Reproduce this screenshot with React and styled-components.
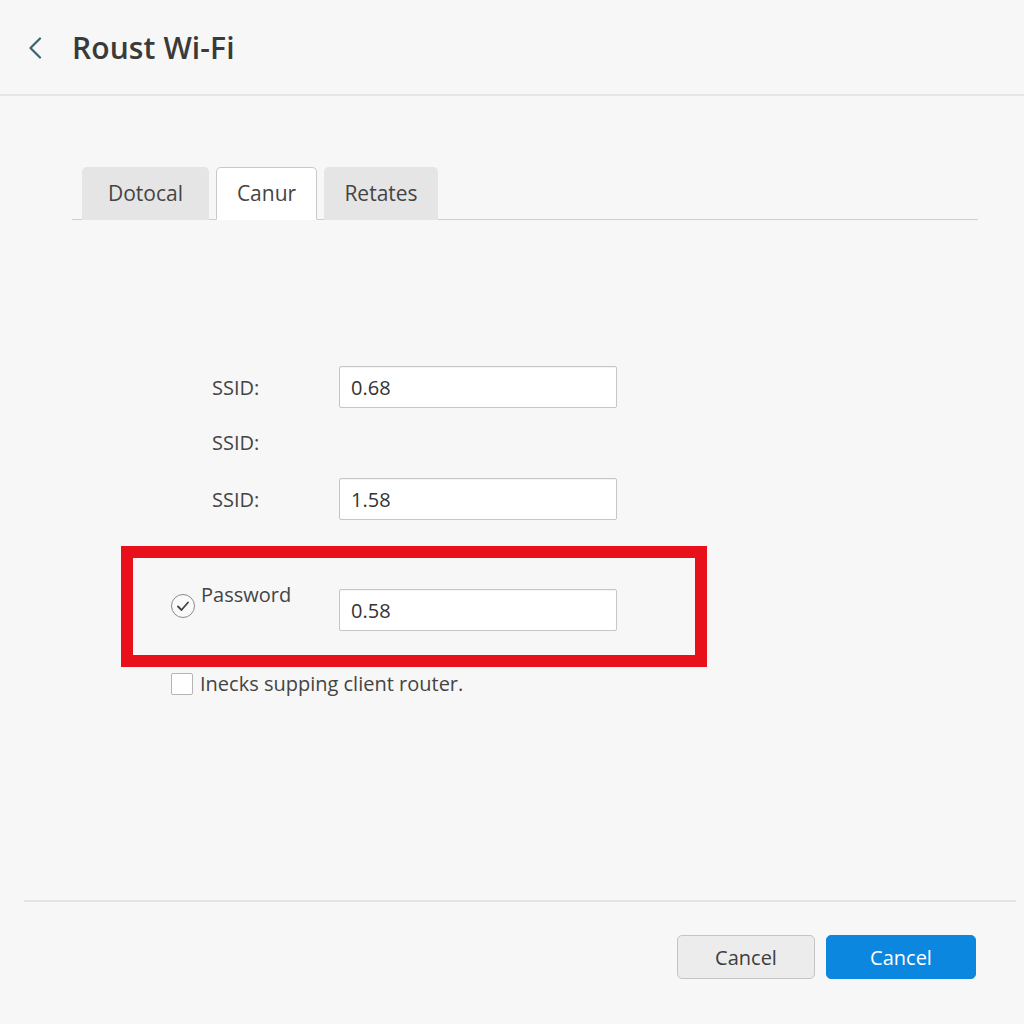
import React from "react";
import styled, { createGlobalStyle } from "styled-components";

const Global = createGlobalStyle`
  html, body { margin: 0; padding: 0; background: #f7f7f7; }
  body { font-family: "Open Sans", "Noto Sans", "Liberation Sans", sans-serif; color: #333; }
  * { box-sizing: border-box; }
`;

const Page = styled.div`
  min-height: 1024px;
  display: flex;
  flex-direction: column;
  background: #f7f7f7;
`;

const Header = styled.header`
  height: 96px;
  display: flex;
  align-items: center;
  padding-left: 26px;
  border-bottom: 2px solid #e6e6e6;
  gap: 28px;
`;

const BackButton = styled.button`
  border: 0;
  background: transparent;
  padding: 0;
  width: 18px;
  height: 24px;
  display: flex;
  align-items: center;
  justify-content: center;
  margin-top: 2px;
`;

const Title = styled.h1`
  margin: 0;
  font-size: 30px;
  font-weight: 600;
  color: #3a3a3a;
  letter-spacing: 0.1px;
  margin-top: 1px;
`;

const Content = styled.main`
  flex: 1;
  display: flex;
  flex-direction: column;
`;

const TabBar = styled.div`
  margin: 71px 46px 0 72px;
  padding-left: 10px;
  display: flex;
  gap: 7px;
  border-bottom: 1px solid #cfcfcf;
  height: 53px;
`;

const Tab = styled.div`
  width: ${(p) => p.$w}px;
  height: 53px;
  display: flex;
  align-items: center;
  justify-content: center;
  font-size: 21px;
  color: #444;
  border-radius: 5px 5px 0 0;
  background: ${(p) => (p.$active ? "#ffffff" : "#e5e5e5")};
  border: 1px solid ${(p) => (p.$active ? "#c9c9c9" : "#e5e5e5")};
  border-bottom: ${(p) => (p.$active ? "1px solid #ffffff" : "0")};
  padding-bottom: 2px;
`;

const Form = styled.div`
  margin: 146px 0 0 121px;
  display: flex;
  flex-direction: column;
`;

const Row = styled.div`
  display: grid;
  grid-template-columns: 127px 278px;
  align-items: center;
  padding-left: 91px;
  height: ${(p) => p.$h || 42}px;
  margin-top: ${(p) => p.$mt || 0}px;
`;

const Label = styled.span`
  font-size: 20px;
  color: #444;
`;

const Input = styled.div`
  height: 42px;
  background: #fff;
  border: 1px solid #c6c6c6;
  border-radius: 2px;
  box-shadow: inset 0 1px 1px rgba(0, 0, 0, 0.05);
  display: flex;
  align-items: center;
  padding-left: 11px;
  font-size: 20px;
  color: #333;
`;

const Highlight = styled.div`
  margin-top: 26px;
  width: 586px;
  height: 121px;
  border: 12px solid #e8101a;
  padding: 31px 0 0 38px;
  display: grid;
  grid-template-columns: 168px 278px;
  align-items: start;
`;

const CheckLabel = styled.div`
  display: flex;
  align-items: flex-start;
  gap: 6px;
`;

const CheckCircle = styled.span`
  width: 24px;
  height: 24px;
  margin-top: 5px;
  border: 1.5px solid #8a8a8a;
  border-radius: 50%;
  display: flex;
  align-items: center;
  justify-content: center;
  background: #fafafa;
`;

const PassText = styled.span`
  font-size: 20px;
  color: #444;
  margin-top: -8px;
`;

const CheckRow = styled.label`
  display: flex;
  align-items: center;
  gap: 7px;
  margin-top: 3px;
  padding-left: 50px;
  font-size: 20px;
  color: #444;
`;

const Box = styled.span`
  width: 22px;
  height: 22px;
  border: 1.5px solid #b5b5b5;
  border-radius: 2px;
  background: #fff;
`;

const Footer = styled.footer`
  margin: 0 8px 0 24px;
  border-top: 2px solid #e4e4e4;
  padding: 33px 40px 45px 0;
  display: flex;
  justify-content: flex-end;
  gap: 11px;
`;

const Button = styled.button`
  width: ${(p) => p.$w}px;
  height: 44px;
  border-radius: 5px;
  font-family: inherit;
  font-size: 20px;
  background: ${(p) => (p.$primary ? "#0b87e0" : "#ececec")};
  color: ${(p) => (p.$primary ? "#ffffff" : "#3e3e3e")};
  border: 1px solid ${(p) => (p.$primary ? "#0b87e0" : "#c4c4c4")};
  font-weight: ${(p) => (p.$primary ? 500 : 400)};
`;

export default function App() {
  return (
    <Page>
      <Global />
      <Header>
        <BackButton aria-label="Back">
          <svg width="14" height="22" viewBox="0 0 14 22" fill="none">
            <path d="M12 1.5 L2.5 11 L12 20.5" stroke="#3b6470" strokeWidth="2.2" strokeLinecap="round" strokeLinejoin="round" />
          </svg>
        </BackButton>
        <Title>Roust Wi-Fi</Title>
      </Header>
      <Content>
        <TabBar>
          <Tab $w={127}>Dotocal</Tab>
          <Tab $w={101} $active>Canur</Tab>
          <Tab $w={114}>Retates</Tab>
        </TabBar>
        <Form>
          <Row>
            <Label>SSID:</Label>
            <Input>0.68</Input>
          </Row>
          <Row $mt={13} $h={43}>
            <Label>SSID:</Label>
          </Row>
          <Row $mt={14}>
            <Label>SSID:</Label>
            <Input>1.58</Input>
          </Row>
          <Highlight>
            <CheckLabel>
              <CheckCircle>
                <svg width="14" height="12" viewBox="0 0 14 12" fill="none">
                  <path d="M2 6.5 L5.5 10 L12 2.5" stroke="#444" strokeWidth="1.8" strokeLinecap="round" strokeLinejoin="round" />
                </svg>
              </CheckCircle>
              <PassText>Password</PassText>
            </CheckLabel>
            <Input>0.58</Input>
          </Highlight>
          <CheckRow>
            <Box />
            Inecks supping client router.
          </CheckRow>
        </Form>
      </Content>
      <Footer>
        <Button $w={138}>Cancel</Button>
        <Button $w={150} $primary>Cancel</Button>
      </Footer>
    </Page>
  );
}
